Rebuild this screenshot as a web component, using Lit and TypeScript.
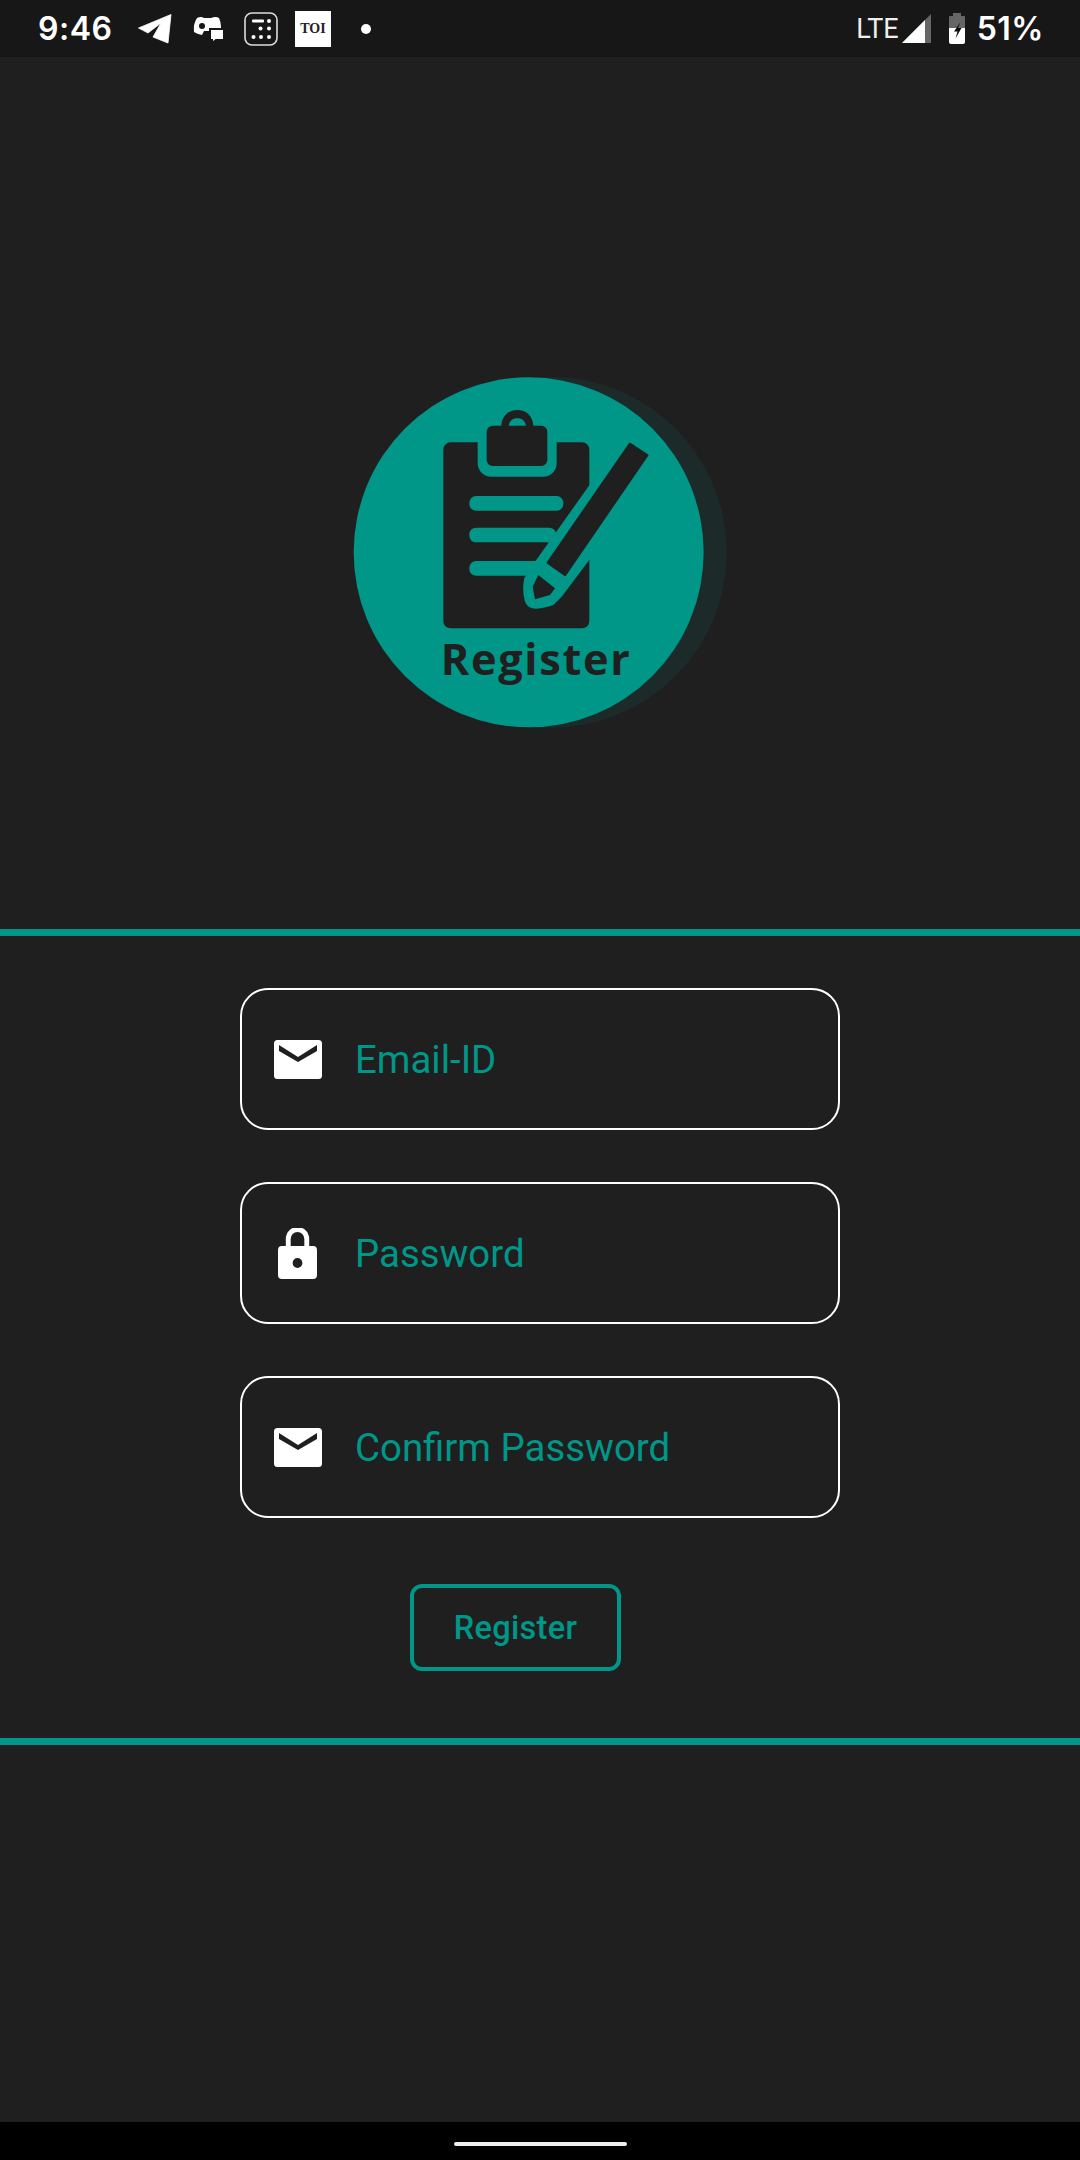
import { LitElement, html, css, svg } from 'lit';
import { customElement } from 'lit/decorators.js';

const mailIcon = svg`<path d="M3.5 0h41A3.5 3.5 0 0 1 48 3.5v32a3.5 3.5 0 0 1-3.5 3.5h-41A3.5 3.5 0 0 1 0 35.500v-32A3.500 3.500 0 0 1 3.500 0z" fill="#fff"/><path d="M5 5l19 12L43 5v6L24 22 5 11z" fill="#1f1f1f"/>`;
const lockIcon = svg`<path fill-rule="evenodd" fill="#fff" d="M8 18v-7a12 12 0 0 1 24 0v7h4a4 4 0 0 1 4 4v25a4 4 0 0 1-4 4H4a4 4 0 0 1-4-4V22a4 4 0 0 1 4-4zM13 18h14v-7a7 7 0 0 0-14 0zM20 30a5 5 0 1 0 0 10 5 5 0 0 0 0-10z"/>`;

/** Registration screen: status bar, logo, form between two dividers, nav bar. */
@customElement('app-root')
export class AppRoot extends LitElement {
  static styles = css`
    :host {
      display: flex;
      flex-direction: column;
      width: 1080px;
      height: 2160px;
      background: #1f1f1f;
      font-family: Roboto, sans-serif;
      overflow: hidden;
    }

    .status {
      flex: none;
      height: 57px;
      background: #171717;
      color: #fff;
      display: flex;
      align-items: center;
      padding: 0 36px 0 38px;
    }
    .status svg {
      display: block;
      flex: none;
    }
    .clock,
    .pct {
      font: 600 32px Inter, sans-serif;
      letter-spacing: 0.5px;
    }
    .clock {
      width: 100px;
    }
    .chat-icon {
      margin-left: 20px;
    }
    .calc-icon {
      margin-left: 20px;
    }
    .toi {
      margin-left: 17px;
      width: 36px;
      height: 36px;
      background: #fff;
      color: #222;
      font: 700 14px 'Liberation Serif', serif;
      display: flex;
      align-items: center;
      justify-content: center;
    }
    .dot {
      margin-left: 30px;
      width: 10px;
      height: 10px;
      border-radius: 50%;
      background: #fff;
    }
    .status-right {
      margin-left: auto;
      display: flex;
      align-items: center;
    }
    .lte {
      font: 400 27px Roboto, sans-serif;
      color: #eee;
      margin-right: 3px;
    }
    .batt-icon {
      margin: 0 12px 0 18px;
    }

    .logo-area {
      flex: none;
      height: 872px;
      padding-top: 303px;
      box-sizing: border-box;
      display: flex;
      justify-content: center;
    }
    .logo {
      display: block;
      width: 400px;
      height: 380px;
    }
    .logo text {
      font: 700 130px 'Open Sans', sans-serif;
      letter-spacing: 5px;
      fill: #1f1f1f;
    }

    .rule {
      flex: none;
      height: 7px;
      background: #009688;
    }

    .form {
      flex: none;
      height: 802px;
      box-sizing: border-box;
      padding-top: 52px;
      display: flex;
      flex-direction: column;
      align-items: center;
    }
    .field {
      width: 600px;
      height: 142px;
      box-sizing: border-box;
      border: 2.5px solid #fff;
      border-radius: 28px;
      display: flex;
      align-items: center;
      margin-bottom: 52px;
      color: #009688;
      font-size: 38.4px;
    }
    .field-icon {
      flex: none;
      width: 48px;
      display: flex;
      justify-content: center;
      margin: 0 33.500px 0 31.500px;
    }
    .field-icon svg {
      display: block;
    }
    .btn {
      margin: 14px 49px 0 0;
      width: 211px;
      height: 87px;
      box-sizing: border-box;
      border: 4.5px solid #009688;
      border-radius: 12px;
      background: none;
      color: #009688;
      font: 500 32.500px Roboto, sans-serif;
      letter-spacing: 0.3px;
      padding: 0;
    }

    .spacer {
      flex: 1;
    }
    .nav {
      flex: none;
      height: 38px;
      background: #000;
      display: flex;
      justify-content: center;
      padding-top: 20px;
      box-sizing: border-box;
    }
    .pill {
      width: 173px;
      height: 4px;
      border-radius: 2px;
      background: #eee;
    }
  `;

  private _field(label: string, icon: 'mail' | 'lock') {
    return html`
      <div class="field">
        <span class="field-icon">
          ${icon === 'mail'
            ? html`<svg width="48" height="39" viewBox="0 0 48 39">${mailIcon}</svg>`
            : html`<svg width="39" height="51" viewBox="0 0 40 51" preserveAspectRatio="none">${lockIcon}</svg>`}
        </span>
        <span>${label}</span>
      </div>
    `;
  }

  private _statusBar() {
    return html`
      <div class="status">
        <span class="clock">9:46</span>
        <svg width="34" height="30" viewBox="0 0 34 30">
          <path fill="#fff" d="M0.500 14 33 0.500 30 29 15 23 23 9 10 19z" stroke="#fff" stroke-width="0.800" stroke-linejoin="round" />
        </svg>
        <svg class="chat-icon" width="32" height="28" viewBox="0 0 32 28">
          <path fill="#fff" d="M5 3Q9 1 12 3H19Q24 1 27 3 29 7 29 12V16H12L10 20Q5 19 2 17 1 9 5 3z" />
          <circle cx="10" cy="11" r="3" fill="#171717" />
          <path fill="#fff" stroke="#171717" stroke-width="2" d="M18 14h14v11h-8l-4 3v-3h-2z" />
        </svg>
        <svg class="calc-icon" width="34" height="34" viewBox="0 0 34 34">
          <rect x="1" y="1" width="32" height="32" rx="7" fill="none" stroke="#ddd" stroke-width="1.600" />
          <rect x="8" y="7.500" width="12" height="3" rx="1" fill="#fff" />
          <g fill="#fff">
            <circle cx="25" cy="9" r="2" />
            <circle cx="16.500" cy="16.500" r="2" />
            <circle cx="25" cy="16.500" r="2" />
            <circle cx="9.500" cy="25" r="2" />
            <circle cx="17" cy="25" r="2" />
            <circle cx="25" cy="25" r="2" />
          </g>
        </svg>
        <span class="toi">TOI</span>
        <span class="dot"></span>
        <div class="status-right">
          <span class="lte">LTE</span>
          <svg width="29" height="29" viewBox="0 0 29 29">
            <path fill="#666" d="M29 0v29H0z" />
            <path fill="#fff" d="M23 6v23H0z" />
          </svg>
          <svg class="batt-icon" width="16" height="31" viewBox="0 0 16 31">
            <path fill="#666" d="M4 0h8v3h3a1 1 0 0 1 1 1v11H0V4a1 1 0 0 1 1-1h3z" />
            <path fill="#fff" d="M0 15h16v14a2 2 0 0 1-2 2H2a2 2 0 0 1-2-2z" />
            <path fill="#0c0c0c" d="M11.500 9 5 18.500h3.500l-2 7L12.500 15H9z" />
          </svg>
          <span class="pct">51%</span>
        </div>
      </div>
    `;
  }

  render() {
    return html`
      ${this._statusBar()}
      <div class="logo-area">
        <svg class="logo" viewBox="0 0 1200 1140">
          <circle cx="634" cy="577" r="526" fill="#1c2b2a" />
          <circle cx="566" cy="577" r="525" fill="#009688" />
          <rect x="310" y="247" width="438" height="558" rx="22" fill="#1f1f1f" />
          <g fill="#009688">
            <rect x="388" y="408" width="282" height="44" rx="20" />
            <rect x="388" y="503" width="260" height="44" rx="20" />
            <rect x="388" y="603" width="220" height="44" rx="20" />
            <path d="M750 373 585 605 553 655Q545 690 555 725 565 748 590 746 625 742 640 735L665 710 750 597z" />
            <path d="M413 240h237v70a40 40 0 0 1-40 40H453a40 40 0 0 1-40-40z" />
          </g>
          <path d="M870 252 921 286 675 644 624 608z" fill="#1f1f1f" stroke="#1f1f1f" stroke-width="8" stroke-linejoin="round" />
          <path d="M595 645 645 685 630 705 585 718 578 680z" fill="#1f1f1f" />
          <path fill="#1f1f1f" fill-rule="evenodd" d="M440 215a18 18 0 0 1 18-18h26c2-30 22-47 48-47s46 17 48 47h24a18 18 0 0 1 18 18v85a18 18 0 0 1-18 18H458a18 18 0 0 1-18-18zM506 197h52c-2-14-12-22-26-22s-24 8-26 22z" />
          <text x="302" y="945">Register</text>
        </svg>
      </div>
      <div class="rule"></div>
      <div class="form">
        ${this._field('Email-ID', 'mail')}
        ${this._field('Password', 'lock')}
        ${this._field('Confirm Password', 'mail')}
        <button class="btn">Register</button>
      </div>
      <div class="rule"></div>
      <div class="spacer"></div>
      <div class="nav"><div class="pill"></div></div>
    `;
  }
}

declare global {
  interface HTMLElementTagNameMap {
    'app-root': AppRoot;
  }
}
